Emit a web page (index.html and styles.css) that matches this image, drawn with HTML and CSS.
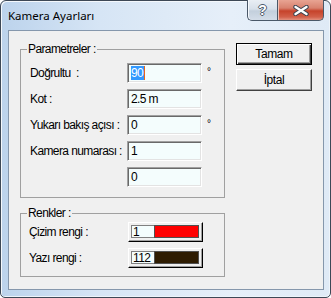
FILE: index.html
```html
<!DOCTYPE html>
<html lang="tr">
<head>
  <meta charset="UTF-8" />
  <title>Kamera Ayarları</title>
  <link rel="stylesheet" href="styles.css">
</head>
<body>
  <div class="window">
    <div class="titlebar">
      <span class="title">Kamera Ayarları</span>
      <div class="caption-buttons">
        <button class="cap help"><span>?</span></button>
        <button class="cap close">
          <svg width="18" height="11" viewBox="0 0 18 11">
            <path d="M3.5 2 L14.5 9 M14.5 2 L3.5 9" stroke="#3a4350" stroke-width="4.4" stroke-linecap="round"/>
            <path d="M3.5 2 L14.5 9 M14.5 2 L3.5 9" stroke="#fff" stroke-width="2.4" stroke-linecap="round"/>
          </svg>
        </button>
      </div>
    </div>

    <div class="client">
      <div class="groups">
        <fieldset class="group params">
          <legend>Parametreler :</legend>
          <div class="row">
            <label>Doğrultu &nbsp;:</label>
            <div class="field"><span class="sel">90</span><span class="caret"></span></div>
            <span class="unit">°</span>
          </div>
          <div class="row">
            <label>Kot :</label>
            <div class="field">2.5 m</div>
          </div>
          <div class="row">
            <label>Yukarı bakış açısı :</label>
            <div class="field">0</div>
            <span class="unit">°</span>
          </div>
          <div class="row">
            <label>Kamera numarası :</label>
            <div class="field">1</div>
          </div>
          <div class="row">
            <label></label>
            <div class="field">0</div>
          </div>
        </fieldset>

        <fieldset class="group colors">
          <legend>Renkler :</legend>
          <div class="row">
            <label>Çizim rengi :</label>
            <div class="swatch">
              <span class="swatch-num">1</span>
              <span class="swatch-color red"></span>
            </div>
          </div>
          <div class="row">
            <label>Yazı rengi :</label>
            <div class="swatch">
              <span class="swatch-num">112</span>
              <span class="swatch-color brown"></span>
            </div>
          </div>
        </fieldset>
      </div>

      <div class="actions">
        <button class="btn default">Tamam</button>
        <button class="btn">İptal</button>
      </div>
    </div>
  </div>
</body>
</html>
```

FILE: styles.css
```css
* {
  margin: 0;
  padding: 0;
  box-sizing: border-box;
}
body {
  background: #fff;
  font-family: 'Liberation Sans', Arial, sans-serif;
  font-size: 12px;
  letter-spacing: -0.6px;
  color: #000;
}
.window {
  width: 331px;
  height: 298px;
  border: 1px solid #3d4856;
  border-radius: 6px 6px 5px 5px;
  background: linear-gradient(to right, #bcd3ec 0%, #d6e5f5 30%, #e6eff9 70%, #dfeaf6 100%);
  box-shadow: inset 1px 1px 0 #f4f8fc, inset -1px -1px 0 #eef4fa;
  display: flex;
  flex-direction: column;
}
.titlebar {
  height: 29px;
  display: flex;
  align-items: flex-start;
  padding-left: 7px;
}
.title {
  font-family: 'Noto Sans', 'Open Sans', sans-serif;
  font-size: 11.5px;
  letter-spacing: 0;
  line-height: 14px;
  margin-top: 8px;
  color: #000;
}
.caption-buttons {
  margin-left: auto;
  margin-right: 6px;
  margin-top: -1px;
  display: flex;
}
.cap {
  height: 21px;
  border: 1px solid #4a5868;
  border-top: none;
  display: flex;
  align-items: center;
  justify-content: center;
}
.help {
  width: 30px;
  border-radius: 0 0 0 5px;
  border-right: none;
  background: linear-gradient(to bottom, #e9eef4 0%, #d7e0ea 45%, #c3cfdc 55%, #d3dde8 100%);
  box-shadow: inset 1px 0 0 #f6f9fc;
}
.help span {
  font-family: 'Liberation Sans', sans-serif;
  font-weight: 700;
  font-size: 14px;
  letter-spacing: 0;
  color: #fff;
  margin-top: -1px;
  text-shadow: 1px 0 0 #4e5c6c, -1px 0 0 #4e5c6c, 0 1px 0 #4e5c6c, 0 -1px 0 #4e5c6c;
}
.close {
  width: 47px;
  border-radius: 0 0 5px 0;
  background: linear-gradient(to bottom, #e8a493 0%, #d8826f 40%, #c6432b 55%, #d2604a 85%, #e2917f 100%);
  box-shadow: inset 1px 0 0 #f1c2b6;
}
.client {
  flex: 1;
  margin: 0 6px 7px 7px;
  border: 1px solid #8597ac;
  background: #f0f0f0;
  padding: 11px 10px 0 11px;
  display: flex;
  gap: 11px;
}
.groups {
  width: 205px;
  display: flex;
  flex-direction: column;
}
.group {
  border: 1px solid #a0a0a0;
  padding: 0 0 0 6px;
  display: flex;
  flex-direction: column;
  gap: 6px;
}
.group legend {
  padding: 0 1px;
  line-height: 14px;
}
.params {
  padding-bottom: 10px;
}
.params .row:first-of-type {
  margin-top: 7px;
}
.colors {
  margin-top: 8px;
  padding-bottom: 8px;
}
.colors .row:first-of-type {
  margin-top: 2px;
}
.row {
  display: flex;
  align-items: center;
  height: 20px;
}
.row label {
  width: 100px;
  padding-left: 3px;
  white-space: nowrap;
}
.colors .row label {
  width: 101px;
  padding-left: 2px;
}
.field {
  width: 75px;
  height: 20px;
  border: 1px solid;
  border-color: #a0a0a0 #fff #fff #a0a0a0;
  box-shadow: inset 1px 1px 0 #696969, inset -1px -1px 0 #e3e3e3;
  background: #f4fdfd;
  padding: 2px 0 0 3px;
  line-height: 15px;
  display: flex;
  align-items: flex-start;
}
.sel {
  background: #3399ff;
  color: #fff;
  height: 14px;
  line-height: 14px;
  padding-right: 1px;
}
.caret {
  width: 1px;
  height: 14px;
  background: #e8641a;
}
.unit {
  margin-left: 5px;
  align-self: flex-start;
  font-size: 10px;
  line-height: 10px;
  margin-top: 4px;
}
.swatch {
  width: 75px;
  height: 20px;
  border: 1px solid;
  border-color: #fff #000 #000 #fff;
  box-shadow: inset -1px -1px 0 #a0a0a0;
  padding: 2px 3px 3px 2px;
  display: flex;
}
.swatch-num {
  width: 23px;
  border: 1px solid #808080;
  border-right: none;
  background: #f4fdfd;
  line-height: 12px;
  padding-left: 1px;
}
.swatch-color {
  flex: 1;
  border: 1px solid #505050;
}
.red {
  background: #ff0000;
}
.brown {
  background: #2e1c02;
}
.actions {
  display: flex;
  flex-direction: column;
  gap: 4px;
  padding-top: 1px;
}
.btn {
  width: 76px;
  height: 22px;
  font-family: inherit;
  font-size: 12px;
  letter-spacing: -0.4px;
  background: #f0f0f0;
  color: #000;
  border: 1px solid;
  border-color: #fff #404040 #404040 #fff;
  box-shadow: inset -1px -1px 0 #a0a0a0;
}
.btn.default {
  border-color: #000;
  box-shadow: inset 1px 1px 0 #fff, inset -1px -1px 0 #404040, inset -2px -2px 0 #a0a0a0;
}
```
